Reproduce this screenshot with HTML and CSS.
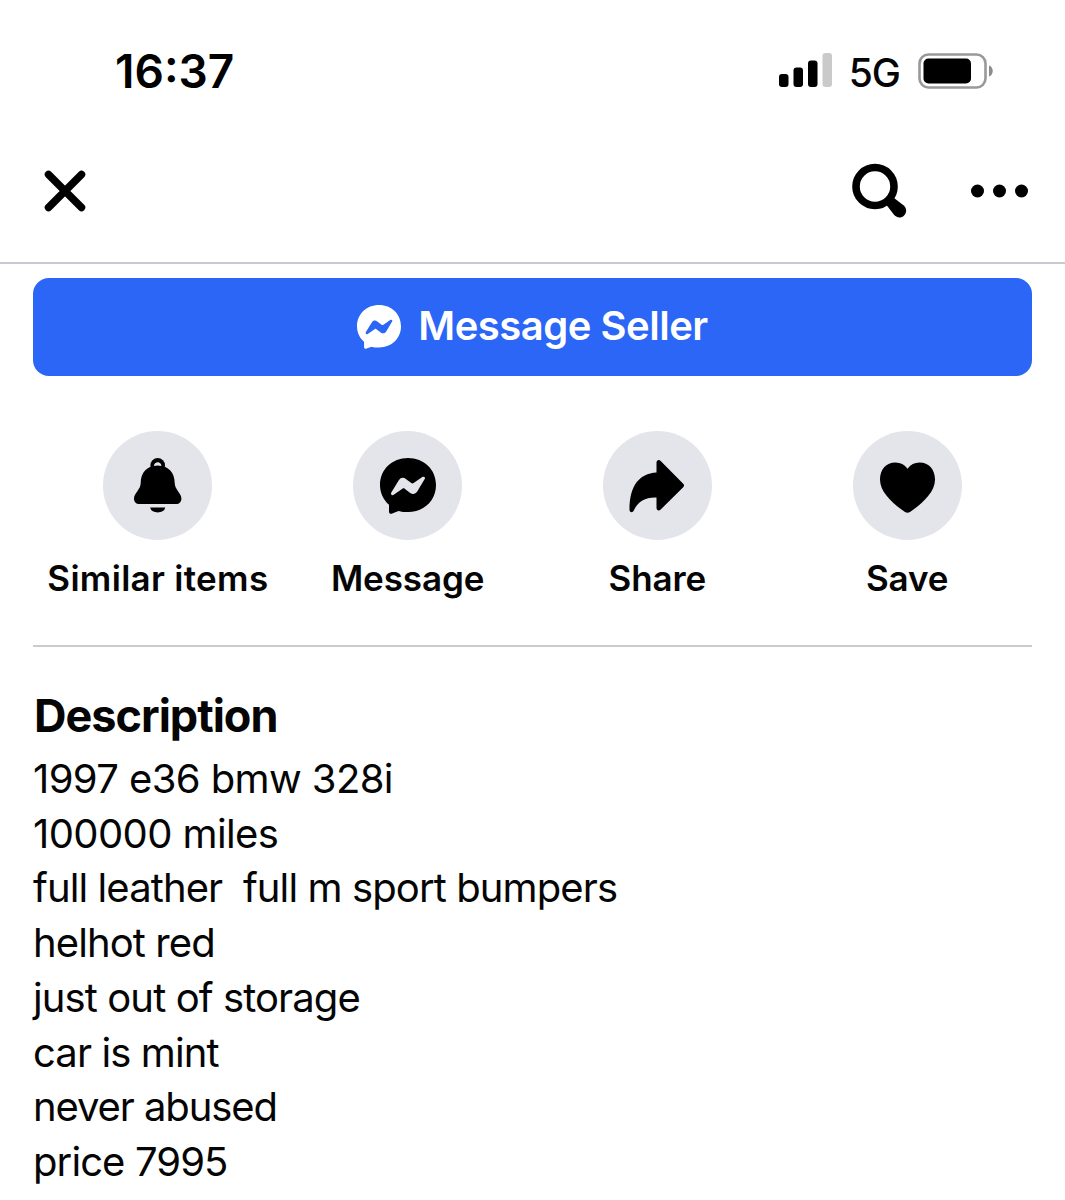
FILE: index.html
```
<!DOCTYPE html>
<html lang="en">
<head>
<meta charset="UTF-8">
<meta name="viewport" content="width=device-width, initial-scale=1.0">
<title>Marketplace listing</title>
<link rel="stylesheet" href="styles.css">
</head>
<body>

<header class="top">
  <div class="status-bar">
    <span class="time">16<span class="colon">:</span>37</span>
    <div class="status-icons">
      <svg class="signal" width="54" height="36" viewBox="0 0 54 36">
        <rect x="0" y="21" width="9.5" height="13" rx="3"/>
        <rect x="14.5" y="14.5" width="9.5" height="19.5" rx="3"/>
        <rect x="29" y="7.5" width="9.5" height="26.5" rx="3"/>
        <rect x="43.5" y="0" width="9.5" height="34" rx="3" fill="#cacaca"/>
      </svg>
      <span class="network">5G</span>
      <svg class="battery" width="76" height="36" viewBox="0 0 76 36">
        <rect x="1.5" y="1.5" width="66" height="33" rx="9" fill="none" stroke="#999" stroke-width="2.6"/>
        <rect x="5.5" y="5.5" width="47.5" height="25" rx="5"/>
        <path d="M71 12.5c5 1.5 5 9.5 0 11z" fill="#8c8c8c"/>
      </svg>
    </div>
  </div>
  <nav class="nav-bar">
    <svg width="42" height="42" viewBox="0 0 42 42">
      <path d="M4.5 4.500l33 33M37.500 4.500L4.500 37.500" fill="none" stroke="#000" stroke-width="7.500" stroke-linecap="round"/>
    </svg>
    <div class="nav-actions">
      <svg width="56" height="56" viewBox="0 0 56 56">
        <circle cx="23" cy="23.500" r="19" fill="none" stroke="#000" stroke-width="7.600"/>
        <path d="M34.500 42l7.700 10c6.500 7 16.500-2.500 9.600-9.600L42 35z"/>
      </svg>
      <svg width="58" height="14" viewBox="0 0 58 14">
        <circle cx="6.500" cy="7" r="6.500"/>
        <circle cx="28.500" cy="7" r="6.500"/>
        <circle cx="50.500" cy="7" r="6.500"/>
      </svg>
    </div>
  </nav>
</header>

<main>
  <button class="message-seller">
    <svg width="44" height="44" viewBox="0 0 56 56">
      <path fill="#fff" d="M28 0C12 0 0 11.500 0 27c0 8 3.500 15 9 19.800v6.700c0 2 1.500 2.800 3.200 2l6.300-2.500C21.500 54 24.500 54 28 54c16 0 28-11.500 28-27S44 0 28 0z"/>
      <path fill="#2b66f6" d="M11.300 34.500l7.500-12.200c1.800-2.800 4.500-3.200 7-1.400l5.500 4.200c.8.600 1.500.6 2.300 0l8.700-6c1.700-1.200 3.500.3 2.400 2l-7.500 12.500c-1.800 2.800-4.500 3.200-7 1.400l-5.500-4.200c-.8-.6-1.500-.6-2.300 0l-8.700 6c-1.700 1.200-3.500-.5-2.400-2.300z"/>
    </svg>
    <span>Message Seller</span>
  </button>

  <div class="actions">
    <div class="action">
      <div class="circle">
        <svg width="56" height="56" viewBox="0 0 56 56">
          <circle cx="27.700" cy="7.300" r="7.300"/>
          <path d="M27.700 7.500c11 0 17 7.500 17 17.500 0 6.500 6.700 10 6.700 15.500 0 3.500-2 5.500-5.500 5.500H9.500c-3.500 0-5.500-2-5.500-5.500 0-5.500 6.700-9 6.700-15.500 0-10 6-17.500 17-17.500z"/>
          <path d="M24 8c0-5 7.400-5 7.400 0-2.500-.7-4.900-.7-7.400 0z" fill="#e4e4eb"/>
          <path d="M20.200 49.500h15c-.8 6.500-14.200 6.500-15 0z"/>
        </svg>
      </div>
      <span class="wide">Similar items</span>
    </div>
    <div class="action">
      <div class="circle">
        <svg width="56" height="56" viewBox="0 0 56 56">
          <path d="M28 0C12 0 0 11.500 0 27c0 8 3.500 15 9 19.800v6.700c0 2 1.500 2.800 3.200 2l6.300-2.500C21.500 54 24.500 54 28 54c16 0 28-11.500 28-27S44 0 28 0z"/>
          <path fill="#e4e4eb" d="M11.300 34.500l7.500-12.200c1.800-2.800 4.500-3.200 7-1.400l5.500 4.200c.8.600 1.500.6 2.300 0l8.700-6c1.700-1.200 3.500.3 2.400 2l-7.500 12.500c-1.800 2.800-4.500 3.200-7 1.400l-5.500-4.200c-.8-.6-1.500-.6-2.300 0l-8.700 6c-1.700 1.200-3.500-.5-2.400-2.300z"/>
        </svg>
      </div>
      <span>Message</span>
    </div>
    <div class="action">
      <div class="circle">
        <svg width="56" height="56" viewBox="0 0 56 56">
          <path d="M27.500 14.500V4.500c0-2.500 2.500-3.300 4.200-1.600l22.500 22.900c1.100 1.100 1.100 2.300 0 3.400L31.700 51.500c-1.700 1.700-4.200.9-4.200-1.600V39.500C17 39 9 43 4.800 52.500c-1.200 2.600-4.300 2.200-4.300-.7C.5 28 10 15.500 27.500 14.500z"/>
        </svg>
      </div>
      <span>Share</span>
    </div>
    <div class="action">
      <div class="circle">
        <svg width="56" height="56" viewBox="0 0 56 56">
          <path d="M28.500 10.700C25.500 6.500 21.500 4.500 16.500 4.500 7 4.500 1 11.500 1 21.500c0 12.500 12 23.500 25 32.500 1.700 1.100 3.300 1.100 5 0 13-9 25-20 25-32.500 0-10-6-17-15.500-17-5 0-9 2-12 6.200z"/>
        </svg>
      </div>
      <span>Save</span>
    </div>
  </div>

  <section class="description">
    <h2>Description</h2>
    <p class="numeric">1997 e36 bmw 328i</p>
    <p class="numeric">100000 miles</p>
    <p>full leather  full m sport bumpers</p>
    <p>helhot red</p>
    <p>just out of storage</p>
    <p>car is mint</p>
    <p class="tight">never abused</p>
    <p>price 7995</p>
  </section>
</main>

</body>
</html>
```
FILE: styles.css
```
body {
  margin: 0;
  height: 1200px;
  overflow: hidden;
  background-color: #fff;
  color: #050505;
  font-family: Inter, "Liberation Sans", sans-serif;
}
svg {
  display: block;
  flex: none;
}
.top {
  box-sizing: border-box;
  height: 264px;
  border-bottom: 2px solid #c9c9d2;
}
.status-bar {
  display: flex;
  justify-content: space-between;
  align-items: center;
  height: 142px;
  padding: 0 71px 0 115px;
}
.time {
  font-size: 46px;
  font-weight: 600;
  color: #000;
}
.colon {
  position: relative;
  top: -1px;
}
.status-icons {
  display: flex;
  align-items: center;
}
.network {
  margin: 4px 18px 0 16px;
  font-size: 39px;
  font-weight: 450;
  line-height: 40px;
  letter-spacing: -1px;
}
.nav-bar {
  display: flex;
  justify-content: space-between;
  align-items: center;
  height: 98px;
  padding: 0 36px 0 44px;
}
.nav-actions {
  display: flex;
  align-items: center;
  gap: 63px;
}
main {
  padding: 14px 33px 0;
}
.message-seller {
  display: flex;
  justify-content: center;
  align-items: center;
  gap: 17px;
  width: 100%;
  height: 98px;
  padding: 0;
  border: none;
  border-radius: 16px;
  background-color: #2b66f6;
  color: #fff;
  font-family: inherit;
  font-size: 40px;
  font-weight: 560;
  letter-spacing: -0.5px;
}
.message-seller span {
  padding-bottom: 4px;
}
.actions {
  display: grid;
  grid-template-columns: repeat(4, 1fr);
  height: 214px;
  padding-top: 55px;
  border-bottom: 2px solid #cbcbcf;
}
.action {
  display: flex;
  flex-direction: column;
  align-items: center;
  font-size: 35px;
  font-weight: 580;
  line-height: 42px;
  letter-spacing: -0.1px;
}
.action .wide {
  letter-spacing: 0.3px;
}
.circle {
  display: flex;
  justify-content: center;
  align-items: center;
  width: 109px;
  height: 109px;
  margin-bottom: 17px;
  border-radius: 50%;
  background-color: #e4e4eb;
}
.description h2 {
  margin: 42px 0 9px 1px;
  font-size: 45px;
  font-weight: 700;
  line-height: 54px;
  letter-spacing: -1px;
}
.description p {
  margin: 0;
  font-size: 40px;
  line-height: 54.7px;
  letter-spacing: -0.9px;
  white-space: pre-wrap;
}
.description .numeric {
  letter-spacing: -0.6px;
}
.description .tight {
  letter-spacing: -1.1px;
}
```
